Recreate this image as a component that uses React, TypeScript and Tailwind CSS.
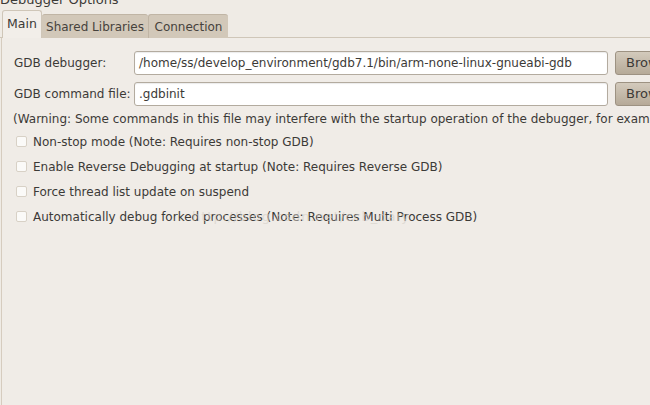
import React from "react"

const font = { fontFamily: '"DejaVu Sans", "Liberation Sans", sans-serif' }

function Check({ label }: { label: string }) {
  return (
    <div className="flex items-center h-[25px] pl-[14px]">
      <span className="w-[11px] h-[11px] rounded-[2px] border border-[#d8d1c6] bg-[#fbfaf8] shrink-0" />
      <span className="ml-[6px] whitespace-nowrap">{label}</span>
    </div>
  )
}

function Field({ label, value }: { label: string; value: string }) {
  return (
    <div className="flex items-center h-[31px]">
      <span className="w-[132px] pl-[12px] shrink-0 whitespace-nowrap">{label}</span>
      <div className="w-[474px] h-[24px] shrink-0 rounded-[3px] border border-[#b3ab9f] bg-white flex items-center px-[4px] shadow-[inset_0_1px_1px_rgba(0,0,0,0.08)]">
        <span className="whitespace-nowrap">{value}</span>
      </div>
      <div className="ml-[7px] w-[60px] h-[24px] shrink-0 rounded-[3px] border border-[#9d9282] bg-gradient-to-b from-[#d3cabc] to-[#b6aa98] flex items-center pl-[10px]">
        <span className="whitespace-nowrap text-[13px]">Browse...</span>
      </div>
    </div>
  )
}

export default function App() {
  return (
    <div
      className="w-[650px] h-[405px] overflow-hidden bg-[#efebe5] text-[12px] text-[#3c3a37] flex flex-col"
      style={font}
    >
      <div className="h-[10px] relative">
        <span className="absolute left-[0px] top-[-10px] text-[13px] whitespace-nowrap">Debugger Options</span>
      </div>
      <div className="flex items-end h-[28px]">
        <div className="w-[2px] h-[1px] bg-[#cfc6b8] shrink-0" />
        <div className="h-[28px] w-[40px] shrink-0 bg-[#f2eee9] border border-b-0 border-[#cfc6b8] rounded-t-[3px] flex items-center justify-center text-[12.5px] whitespace-nowrap">
          Main
        </div>
        <div className="h-[24px] w-[106px] shrink-0 bg-[#d2c8b9] border-t border-[#c0b5a5] rounded-t-[3px] flex items-center justify-center text-[12px] text-[#46423c] whitespace-nowrap">
          Shared Libraries
        </div>
        <div className="h-[24px] w-[80px] shrink-0 bg-[#d2c8b9] border-t border-l border-[#c0b5a5] rounded-t-[3px] flex items-center justify-center text-[12px] text-[#46423c] whitespace-nowrap">
          Connection
        </div>
        <div className="flex-1 h-[1px] bg-[#cfc6b8]" />
      </div>
      <div className="flex-1 border-l border-[#d6ccbf] ml-[1px] bg-[#f0ece7] pt-[9px] flex flex-col">
        <Field label="GDB debugger:" value="/home/ss/develop_environment/gdb7.1/bin/arm-none-linux-gnueabi-gdb" />
        <Field label="GDB command file:" value=".gdbinit" />
        <div className="pl-[11px] h-[20px] flex items-center whitespace-nowrap">
          (Warning: Some commands in this file may interfere with the startup operation of the debugger, for example "run".)
        </div>
        <div className="flex flex-col relative">
          <Check label="Non-stop mode (Note: Requires non-stop GDB)" />
          <Check label="Enable Reverse Debugging at startup (Note: Requires Reverse GDB)" />
          <Check label="Force thread list update on suspend" />
          <Check label="Automatically debug forked processes (Note: Requires Multi Process GDB)" />
          <span className="absolute left-[190px] top-[78px] text-[13px] text-[#d4cfc8] opacity-60 whitespace-nowrap tracking-[1px]">
            http://blog.csdn.net/ccb_daiy
          </span>
        </div>
      </div>
    </div>
  )
}
